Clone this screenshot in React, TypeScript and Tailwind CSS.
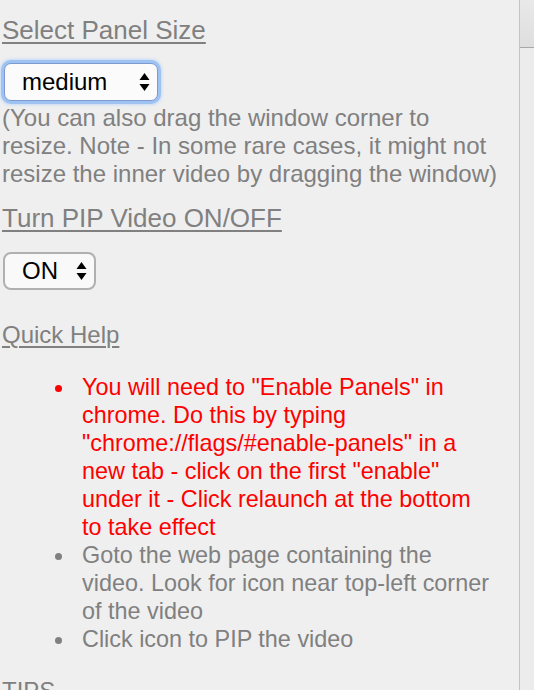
const Arrows = () => (
  <svg width="11" height="20" viewBox="0 0 11 20" className="shrink-0">
    <path d="M5.5 1 L10.5 8 L0.5 8 Z" fill="#000" />
    <path d="M5.5 19 L10.5 12 L0.5 12 Z" fill="#000" />
  </svg>
);

const Bullet = ({ red }: { red?: boolean }) => (
  <span className="w-[80px] shrink-0 flex justify-end pr-[20px] pt-[12px]">
    <span className={`block w-[7px] h-[7px] rounded-full ${red ? "bg-[#ff0000]" : "bg-[#808080]"}`}></span>
  </span>
);

const App = () => {
  return (
    <div className="w-[534px] h-[690px] flex overflow-hidden font-['Liberation_Sans',Arial,sans-serif]">
      <div className="w-[520px] h-full bg-[#efefef] border-r border-[#c4c4c4] pl-[2px]">
        <div className="w-[500px] text-[#808080]">
          <h2 className="pt-[15px] text-[26px] leading-[30px] underline decoration-[2px] underline-offset-[3px]">
            Select Panel Size
          </h2>

          <div className="mt-[18px] ml-[2px] w-[154px] h-[38px] rounded-[7px] border border-[#7d9ad0] bg-[#fbfbfb] shadow-[0_0_0_3px_#9ec3f3,0_0_3px_4px_#c5dbf7] flex items-center justify-between pl-[17px] pr-[7px]">
            <span className="text-[24px] text-black leading-none">medium</span>
            <Arrows />
          </div>

          <p className="mt-[3px] text-[24px] leading-[28px]">
            (You can also drag the window corner to resize. Note - In some rare cases, it might not resize the inner
            video by dragging the window)
          </p>

          <h2 className="mt-[15px] text-[26px] leading-[30px] underline decoration-[2px] underline-offset-[3px]">
            Turn PIP Video ON/OFF
          </h2>

          <div className="mt-[19px] ml-[1px] w-[93px] h-[38px] rounded-[8px] border-2 border-[#b0b0b0] bg-[#f9f9f9] flex items-center justify-between pl-[17px] pr-[7px]">
            <span className="text-[24px] text-black leading-none">ON</span>
            <Arrows />
          </div>

          <h3 className="mt-[31px] text-[24px] leading-[28px] underline decoration-[2px] underline-offset-[3px]">
            Quick Help
          </h3>

          <ul className="mt-[24px] text-[23.4px] leading-[28px]">
            <li className="flex text-[#ff0000]">
              <Bullet red />
              <span className="w-[412px]">
                You will need to "Enable Panels" in chrome. Do this by typing "chrome://flags/#enable-panels" in a new
                tab - click on the first "enable" under it - Click relaunch at the bottom to take effect
              </span>
            </li>
            <li className="flex">
              <Bullet />
              <span className="w-[412px]">
                Goto the web page containing the video. Look for icon near top-left corner of the video
              </span>
            </li>
            <li className="flex">
              <Bullet />
              <span className="w-[412px]">Click icon to PIP the video</span>
            </li>
          </ul>

          <h3 className="mt-[24px] text-[24px] leading-[28px] underline decoration-[2px] underline-offset-[3px]">
            TIPS
          </h3>
        </div>
      </div>
      <div className="flex-1 flex flex-col shadow-[inset_2px_0_2px_rgba(0,0,0,0.08)]">
        <div className="h-[48px] bg-gradient-to-b from-[#e9e9e9] to-[#dedede] border-b border-[#a8a8a8]"></div>
        <div className="flex-1 bg-[#ececec]"></div>
      </div>
    </div>
  );
};

export default App;
